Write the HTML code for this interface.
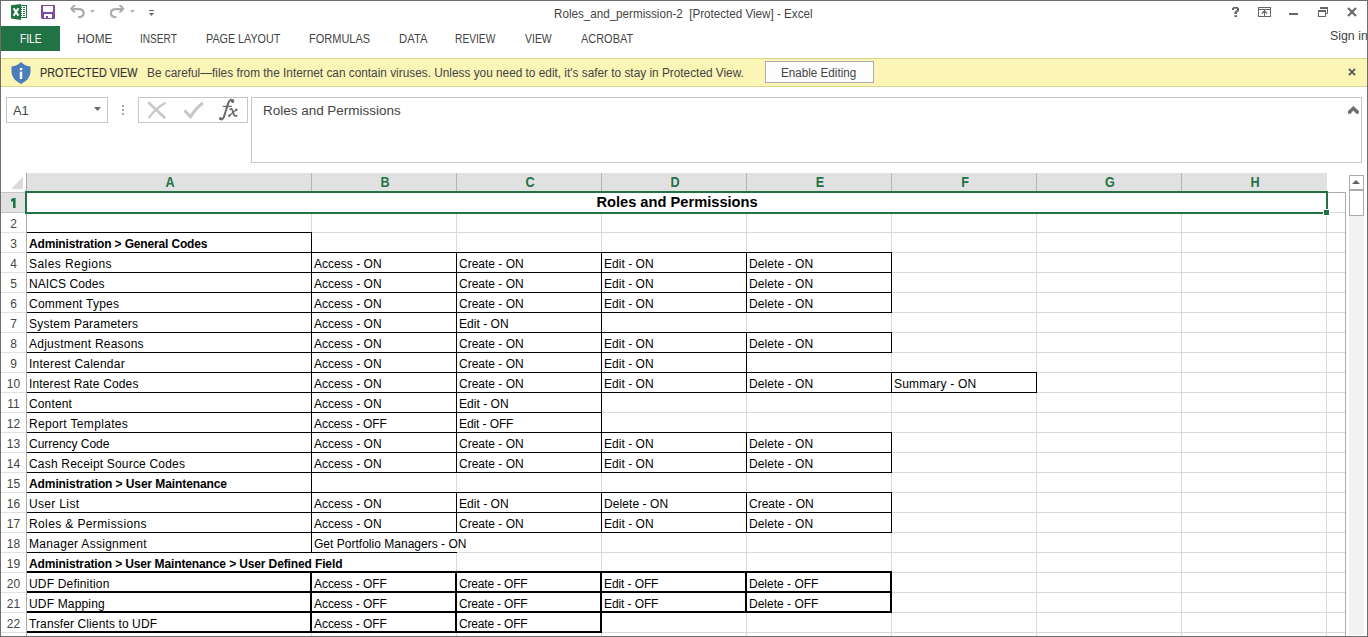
<!DOCTYPE html>
<html><head><meta charset="utf-8"><style>
html,body{margin:0;padding:0;}
body{width:1368px;height:637px;overflow:hidden;position:relative;background:#fff;font-family:'Liberation Sans', sans-serif;}
body div{position:absolute;}
.t{white-space:pre;line-height:0;}
.c{text-align:center;}
svg{position:absolute;}
</style></head><body>
<!-- ribbon / chrome backgrounds -->
<div style="left:1px;top:26px;width:59px;height:25px;background:#217346"></div>
<div style="left:1px;top:58px;width:1366px;height:29px;background:#fbf5b6;border-top:1px solid #dbd68d;border-bottom:1px solid #dbd68d;box-sizing:border-box"></div>
<div style="left:765px;top:61px;width:109px;height:22px;background:#fdfdfd;border:1px solid #ababab;box-sizing:border-box"></div>
<div style="left:6px;top:97px;width:102px;height:26px;border:1px solid #c6c6c6;box-sizing:border-box"></div>
<div style="left:138px;top:97px;width:110px;height:26px;border:1px solid #c6c6c6;box-sizing:border-box"></div>
<div style="left:251px;top:97px;width:1111px;height:66px;border:1px solid #c6c6c6;box-sizing:border-box"></div>
<div class="t" style="left:553.53px;top:14px;font-size:12px;font-weight:400;color:#444;transform:scaleX(0.9698);transform-origin:0 0;">Roles_and_permission-2  [Protected View] - Excel</div>
<div class="t" style="left:19.75px;top:39px;font-size:12px;font-weight:400;color:#fff;transform:scaleX(0.8500);transform-origin:0 0;">FILE</div>
<div class="t" style="left:76.52px;top:39px;font-size:12px;font-weight:400;color:#444;transform:scaleX(0.9800);transform-origin:0 0;">HOME</div>
<div class="t" style="left:140.16px;top:39px;font-size:12px;font-weight:400;color:#444;transform:scaleX(0.8419);transform-origin:0 0;">INSERT</div>
<div class="t" style="left:205.6px;top:39px;font-size:12px;font-weight:400;color:#444;transform:scaleX(0.8963);transform-origin:0 0;">PAGE LAYOUT</div>
<div class="t" style="left:308.58px;top:39px;font-size:12px;font-weight:400;color:#444;transform:scaleX(0.9167);transform-origin:0 0;">FORMULAS</div>
<div class="t" style="left:398.56px;top:39px;font-size:12px;font-weight:400;color:#444;transform:scaleX(0.9448);transform-origin:0 0;">DATA</div>
<div class="t" style="left:455.15px;top:39px;font-size:12px;font-weight:400;color:#444;transform:scaleX(0.8511);transform-origin:0 0;">REVIEW</div>
<div class="t" style="left:525.0px;top:39px;font-size:12px;font-weight:400;color:#444;transform:scaleX(0.8710);transform-origin:0 0;">VIEW</div>
<div class="t" style="left:581.0px;top:39px;font-size:12px;font-weight:400;color:#444;transform:scaleX(0.9123);transform-origin:0 0;">ACROBAT</div>
<div class="t" style="left:1330.47px;top:36px;font-size:12px;font-weight:400;color:#444;transform:scaleX(1.0300);transform-origin:0 0;">Sign in</div>
<div class="t" style="left:40.1px;top:73px;font-size:12px;font-weight:400;color:#333;transform:scaleX(0.9019);transform-origin:0 0;-webkit-text-stroke:0.18px #444;">PROTECTED VIEW</div>
<div class="t" style="left:147.41px;top:73px;font-size:12px;font-weight:400;color:#444;transform:scaleX(0.9854);transform-origin:0 0;">Be careful—files from the Internet can contain viruses. Unless you need to edit, it&#x27;s safer to stay in Protected View.</div>
<div class="t" style="left:780.63px;top:73px;font-size:12px;font-weight:400;color:#444;transform:scaleX(0.9724);transform-origin:0 0;">Enable Editing</div>
<div class="t" style="left:13.0px;top:111px;font-size:12.5px;font-weight:400;color:#444;transform:scaleX(1.0333);transform-origin:0 0;">A1</div>
<div class="t" style="left:262.72px;top:111px;font-size:12.5px;font-weight:400;color:#444;transform:scaleX(1.0772);transform-origin:0 0;">Roles and Permissions</div>
<!-- Excel icon -->
<svg style="left:11px;top:4px" width="17" height="17" viewBox="0 0 17 17">
 <rect x="9.5" y="1.5" width="6" height="12" fill="#fff" stroke="#217346" stroke-width="1"/>
 <polygon points="0,1.2 10,0 10,16 0,14.6" fill="#217346"/>
 <g fill="#217346"><rect x="10" y="3" width="1" height="1"/><rect x="12" y="3" width="2" height="1"/><rect x="10" y="5" width="1" height="1"/><rect x="12" y="5" width="2" height="1"/><rect x="10" y="7" width="1" height="1"/><rect x="12" y="7" width="2" height="1"/><rect x="10" y="9" width="1" height="1"/><rect x="12" y="9" width="2" height="1"/><rect x="10" y="11" width="1" height="1"/><rect x="12" y="11" width="2" height="1"/></g>
 <path d="M2.6 4.3 L7.4 11.8 M7.4 4.3 L2.6 11.8" stroke="#fff" stroke-width="2"/>
</svg>
<!-- Save icon -->
<svg style="left:41px;top:5px" width="14" height="14" viewBox="0 0 14 14">
 <path d="M0 0 H14 V14 H1 L0 13 Z M2 1 V6 Q2 7 3 7 H11 Q12 7 12 6 V1 Z M3 9 V13 H5 V11 H7 V13 H11 V9 Z" fill="#7d48a6" fill-rule="evenodd"/>
</svg>
<!-- undo -->
<svg style="left:69px;top:5px" width="17" height="14" viewBox="0 0 17 14">
 <polygon points="0.9,3.8 4.3,0 7,0 3.6,3.8 7,7.6 4.3,7.6" fill="#ababab"/>
 <path d="M3.5 4.1 H9.5 Q14.6 4.1 14.6 8.2 Q14.6 12.1 9.2 12.1" fill="none" stroke="#ababab" stroke-width="2.2"/>
</svg>
<svg style="left:90px;top:10px" width="5" height="3"><polygon points="0,0 5,0 2.5,3" fill="#b4b4b4"/></svg>
<!-- redo -->
<svg style="left:110px;top:5px" width="17" height="14" viewBox="0 0 17 14">
 <g transform="translate(15.5,0) scale(-1,1)">
 <polygon points="0.9,3.8 4.3,0 7,0 3.6,3.8 7,7.6 4.3,7.6" fill="#ababab"/>
 <path d="M3.5 4.1 H9.5 Q14.6 4.1 14.6 8.2 Q14.6 12.1 9.2 12.1" fill="none" stroke="#ababab" stroke-width="2.2"/>
 </g>
</svg>
<svg style="left:130px;top:10px" width="5" height="3"><polygon points="0,0 5,0 2.5,3" fill="#b4b4b4"/></svg>
<!-- customize QAT -->
<svg style="left:149px;top:10px" width="5" height="6"><rect x="0" y="0" width="5" height="1" fill="#666"/><polygon points="0,3 5,3 2.5,6" fill="#666"/></svg>
<!-- title bar buttons -->
<svg style="left:1232px;top:7px" width="7" height="10" viewBox="0 0 7 10"><g fill="#666">
 <rect x="1" y="0" width="5" height="1.7"/><rect x="0" y="1" width="2" height="2"/><rect x="5" y="1" width="2" height="3.2"/>
 <rect x="3.6" y="3.4" width="2.6" height="1.8"/><rect x="2.4" y="4.6" width="2.6" height="2.4"/><rect x="2.4" y="8.2" width="2.6" height="1.8"/></g></svg>
<svg style="left:1258px;top:7px" width="13" height="10" viewBox="0 0 13 10">
 <rect x="0.5" y="0.5" width="12" height="9" fill="none" stroke="#666" stroke-width="1"/>
 <rect x="0" y="2" width="13" height="1" fill="#666"/>
 <rect x="6" y="2" width="1" height="8" fill="#666"/>
 <path d="M4 6.6 L6.5 4 L9 6.6" fill="none" stroke="#666" stroke-width="1.4"/>
</svg>
<div style="left:1289px;top:13px;width:9px;height:2px;background:#666"></div>
<svg style="left:1318px;top:7px" width="10" height="10" viewBox="0 0 10 10">
 <path d="M2.5 2 V0.5 H9.5 V6.5 H7.5" fill="none" stroke="#666" stroke-width="1"/>
 <rect x="2" y="0" width="8" height="2" fill="#666"/>
 <rect x="0.5" y="3.5" width="7" height="6" fill="none" stroke="#666" stroke-width="1"/>
 <rect x="0" y="3" width="8" height="2" fill="#666"/>
</svg>
<svg style="left:1347px;top:7px" width="10" height="10" viewBox="0 0 10 10">
 <path d="M1 1 L9 9 M9 1 L1 9" stroke="#666" stroke-width="2.1"/>
</svg>
<!-- protected view close -->
<svg style="left:1348px;top:68px" width="8" height="8" viewBox="0 0 8 8">
 <path d="M0.9 0.9 L7.1 7.1 M7.1 0.9 L0.9 7.1" stroke="#585860" stroke-width="1.9"/>
</svg>
<!-- shield -->
<svg style="left:11px;top:62px" width="20" height="23" viewBox="0 0 20 23">
 <path d="M10 0 Q14 4 19.5 4.5 V10 Q19.5 17 10 22 Q0.5 17 0.5 10 V4.5 Q6 4 10 0 Z" fill="#4a7ebb"/>
 <rect x="8.8" y="6" width="2.4" height="2.2" fill="#fff"/>
 <rect x="8.8" y="9.7" width="2.4" height="7.3" fill="#fff"/>
</svg>
<!-- name box dropdown -->
<svg style="left:94px;top:107px" width="8" height="5"><polygon points="0,0 7,0 3.5,4" fill="#6a6a6a"/></svg>
<!-- dots -->
<div style="left:122px;top:105px;width:2px;height:2px;background:#a8a8a8"></div>
<div style="left:122px;top:109px;width:2px;height:2px;background:#a8a8a8"></div>
<div style="left:122px;top:113px;width:2px;height:2px;background:#a8a8a8"></div>
<!-- cancel / enter / fx -->
<svg style="left:147px;top:101px" width="20" height="18" viewBox="0 0 20 18">
 <path d="M2 2 L17.5 16.5" fill="none" stroke="#c6c6c6" stroke-width="2.6" stroke-linecap="round"/>
 <path d="M17.8 2.2 Q9 7 2.2 16.3" fill="none" stroke="#c6c6c6" stroke-width="2.2" stroke-linecap="round"/>
</svg>
<svg style="left:183px;top:101px" width="21" height="18" viewBox="0 0 21 18">
 <path d="M1.5 9.5 L7.5 15.8 Q12 8 19.8 2" fill="none" stroke="#c6c6c6" stroke-width="3" stroke-linejoin="round"/>
</svg>
<svg style="left:214px;top:96px" width="28" height="28" viewBox="0 0 28 28">
 <g fill="none" stroke="#6b6b6b" stroke-linecap="round">
  <path d="M19.2 4.6 Q16.5 2.6 14.6 6.2 L10.2 20 Q8.8 24.6 6.4 22.8" stroke-width="2.1"/>
  <path d="M9.2 10.3 L17.4 10.3" stroke-width="1.3"/>
  <path d="M16.2 13.2 Q17.9 12.3 18.6 14.6 L19.7 18.3 Q20.4 20.6 22.6 19.6" stroke-width="1.8"/>
  <path d="M22.4 13.7 L15.2 19.8" stroke-width="1.2"/>
 </g>
 <g fill="#6b6b6b"><circle cx="18.6" cy="5.4" r="1.5"/><circle cx="6.5" cy="22.4" r="1.5"/><circle cx="22.4" cy="13.7" r="1.2"/><circle cx="15.3" cy="19.8" r="1.2"/></g>
</svg>
<!-- formula bar collapse chevron -->
<svg style="left:1348px;top:106px" width="11" height="8" viewBox="0 0 11 8">
 <polygon points="0,5 5.4,0 10.8,5 10.8,7.8 8.3,7.8 5.4,4.6 2.6,7.8 0,7.8" fill="#6e6e6e"/>
</svg>

<div style="left:27px;top:173px;width:1300px;height:19px;background:#e1e1e1;"></div>
<div style="left:1px;top:193px;width:25px;height:19px;background:#e1e1e1;"></div>
<div style="left:311px;top:173px;width:1px;height:19px;background:#b6b6b6;"></div>
<div style="left:456px;top:173px;width:1px;height:19px;background:#b6b6b6;"></div>
<div style="left:601px;top:173px;width:1px;height:19px;background:#b6b6b6;"></div>
<div style="left:746px;top:173px;width:1px;height:19px;background:#b6b6b6;"></div>
<div style="left:891px;top:173px;width:1px;height:19px;background:#b6b6b6;"></div>
<div style="left:1036px;top:173px;width:1px;height:19px;background:#b6b6b6;"></div>
<div style="left:1181px;top:173px;width:1px;height:19px;background:#b6b6b6;"></div>
<div style="left:26px;top:173px;width:1px;height:464px;background:#ababab;"></div>
<div style="left:1px;top:192px;width:25px;height:1px;background:#c6c6c6;"></div>
<div style="left:1px;top:212px;width:25px;height:1px;background:#c6c6c6;"></div>
<div style="left:1px;top:232px;width:25px;height:1px;background:#e1e1e1;"></div>
<div style="left:1px;top:252px;width:25px;height:1px;background:#e1e1e1;"></div>
<div style="left:1px;top:272px;width:25px;height:1px;background:#e1e1e1;"></div>
<div style="left:1px;top:292px;width:25px;height:1px;background:#e1e1e1;"></div>
<div style="left:1px;top:312px;width:25px;height:1px;background:#e1e1e1;"></div>
<div style="left:1px;top:332px;width:25px;height:1px;background:#e1e1e1;"></div>
<div style="left:1px;top:352px;width:25px;height:1px;background:#e1e1e1;"></div>
<div style="left:1px;top:372px;width:25px;height:1px;background:#e1e1e1;"></div>
<div style="left:1px;top:392px;width:25px;height:1px;background:#e1e1e1;"></div>
<div style="left:1px;top:412px;width:25px;height:1px;background:#e1e1e1;"></div>
<div style="left:1px;top:432px;width:25px;height:1px;background:#e1e1e1;"></div>
<div style="left:1px;top:452px;width:25px;height:1px;background:#e1e1e1;"></div>
<div style="left:1px;top:472px;width:25px;height:1px;background:#e1e1e1;"></div>
<div style="left:1px;top:492px;width:25px;height:1px;background:#e1e1e1;"></div>
<div style="left:1px;top:512px;width:25px;height:1px;background:#e1e1e1;"></div>
<div style="left:1px;top:532px;width:25px;height:1px;background:#e1e1e1;"></div>
<div style="left:1px;top:552px;width:25px;height:1px;background:#e1e1e1;"></div>
<div style="left:1px;top:572px;width:25px;height:1px;background:#e1e1e1;"></div>
<div style="left:1px;top:592px;width:25px;height:1px;background:#e1e1e1;"></div>
<div style="left:1px;top:612px;width:25px;height:1px;background:#e1e1e1;"></div>
<div style="left:1px;top:632px;width:25px;height:1px;background:#e1e1e1;"></div>
<div style="left:27px;top:212px;width:1318px;height:1px;background:#d9d9d9;"></div>
<div style="left:27px;top:232px;width:1318px;height:1px;background:#d9d9d9;"></div>
<div style="left:27px;top:252px;width:1318px;height:1px;background:#d9d9d9;"></div>
<div style="left:27px;top:272px;width:1318px;height:1px;background:#d9d9d9;"></div>
<div style="left:27px;top:292px;width:1318px;height:1px;background:#d9d9d9;"></div>
<div style="left:27px;top:312px;width:1318px;height:1px;background:#d9d9d9;"></div>
<div style="left:27px;top:332px;width:1318px;height:1px;background:#d9d9d9;"></div>
<div style="left:27px;top:352px;width:1318px;height:1px;background:#d9d9d9;"></div>
<div style="left:27px;top:372px;width:1318px;height:1px;background:#d9d9d9;"></div>
<div style="left:27px;top:392px;width:1318px;height:1px;background:#d9d9d9;"></div>
<div style="left:27px;top:412px;width:1318px;height:1px;background:#d9d9d9;"></div>
<div style="left:27px;top:432px;width:1318px;height:1px;background:#d9d9d9;"></div>
<div style="left:27px;top:452px;width:1318px;height:1px;background:#d9d9d9;"></div>
<div style="left:27px;top:472px;width:1318px;height:1px;background:#d9d9d9;"></div>
<div style="left:27px;top:492px;width:1318px;height:1px;background:#d9d9d9;"></div>
<div style="left:27px;top:512px;width:1318px;height:1px;background:#d9d9d9;"></div>
<div style="left:27px;top:532px;width:1318px;height:1px;background:#d9d9d9;"></div>
<div style="left:27px;top:552px;width:1318px;height:1px;background:#d9d9d9;"></div>
<div style="left:27px;top:572px;width:1318px;height:1px;background:#d9d9d9;"></div>
<div style="left:27px;top:592px;width:1318px;height:1px;background:#d9d9d9;"></div>
<div style="left:27px;top:612px;width:1318px;height:1px;background:#d9d9d9;"></div>
<div style="left:27px;top:632px;width:1318px;height:1px;background:#d9d9d9;"></div>
<div style="left:311px;top:213px;width:1px;height:424px;background:#d9d9d9;"></div>
<div style="left:456px;top:213px;width:1px;height:424px;background:#d9d9d9;"></div>
<div style="left:601px;top:213px;width:1px;height:424px;background:#d9d9d9;"></div>
<div style="left:746px;top:213px;width:1px;height:424px;background:#d9d9d9;"></div>
<div style="left:891px;top:213px;width:1px;height:424px;background:#d9d9d9;"></div>
<div style="left:1036px;top:213px;width:1px;height:424px;background:#d9d9d9;"></div>
<div style="left:1181px;top:213px;width:1px;height:424px;background:#d9d9d9;"></div>
<div style="left:1326px;top:193px;width:1px;height:444px;background:#d9d9d9;"></div>
<div style="left:1345px;top:192px;width:1px;height:445px;background:#ababab;"></div>
<div style="left:1327px;top:192px;width:18px;height:1px;background:#ababab;"></div>
<svg style="position:absolute;left:11px;top:177px" width="13" height="13"><polygon points="12,0 12,12 0,12" fill="#dadada"/></svg>
<div style="left:456px;top:533px;width:1px;height:19px;background:#fff;"></div>
<div style="left:311px;top:553px;width:1px;height:19px;background:#fff;"></div>
<div style="left:27px;top:232px;width:285px;height:1px;background:#000"></div>
<div style="left:27px;top:252px;width:285px;height:1px;background:#000"></div>
<div style="left:311px;top:232px;width:1px;height:21px;background:#000"></div>
<div style="left:27px;top:252px;width:285px;height:1px;background:#000"></div>
<div style="left:27px;top:272px;width:285px;height:1px;background:#000"></div>
<div style="left:311px;top:252px;width:1px;height:21px;background:#000"></div>
<div style="left:311px;top:252px;width:146px;height:1px;background:#000"></div>
<div style="left:311px;top:272px;width:146px;height:1px;background:#000"></div>
<div style="left:311px;top:252px;width:1px;height:21px;background:#000"></div>
<div style="left:456px;top:252px;width:1px;height:21px;background:#000"></div>
<div style="left:456px;top:252px;width:146px;height:1px;background:#000"></div>
<div style="left:456px;top:272px;width:146px;height:1px;background:#000"></div>
<div style="left:456px;top:252px;width:1px;height:21px;background:#000"></div>
<div style="left:601px;top:252px;width:1px;height:21px;background:#000"></div>
<div style="left:601px;top:252px;width:146px;height:1px;background:#000"></div>
<div style="left:601px;top:272px;width:146px;height:1px;background:#000"></div>
<div style="left:601px;top:252px;width:1px;height:21px;background:#000"></div>
<div style="left:746px;top:252px;width:1px;height:21px;background:#000"></div>
<div style="left:746px;top:252px;width:146px;height:1px;background:#000"></div>
<div style="left:746px;top:272px;width:146px;height:1px;background:#000"></div>
<div style="left:746px;top:252px;width:1px;height:21px;background:#000"></div>
<div style="left:891px;top:252px;width:1px;height:21px;background:#000"></div>
<div style="left:27px;top:272px;width:285px;height:1px;background:#000"></div>
<div style="left:27px;top:292px;width:285px;height:1px;background:#000"></div>
<div style="left:311px;top:272px;width:1px;height:21px;background:#000"></div>
<div style="left:311px;top:272px;width:146px;height:1px;background:#000"></div>
<div style="left:311px;top:292px;width:146px;height:1px;background:#000"></div>
<div style="left:311px;top:272px;width:1px;height:21px;background:#000"></div>
<div style="left:456px;top:272px;width:1px;height:21px;background:#000"></div>
<div style="left:456px;top:272px;width:146px;height:1px;background:#000"></div>
<div style="left:456px;top:292px;width:146px;height:1px;background:#000"></div>
<div style="left:456px;top:272px;width:1px;height:21px;background:#000"></div>
<div style="left:601px;top:272px;width:1px;height:21px;background:#000"></div>
<div style="left:601px;top:272px;width:146px;height:1px;background:#000"></div>
<div style="left:601px;top:292px;width:146px;height:1px;background:#000"></div>
<div style="left:601px;top:272px;width:1px;height:21px;background:#000"></div>
<div style="left:746px;top:272px;width:1px;height:21px;background:#000"></div>
<div style="left:746px;top:272px;width:146px;height:1px;background:#000"></div>
<div style="left:746px;top:292px;width:146px;height:1px;background:#000"></div>
<div style="left:746px;top:272px;width:1px;height:21px;background:#000"></div>
<div style="left:891px;top:272px;width:1px;height:21px;background:#000"></div>
<div style="left:27px;top:292px;width:285px;height:1px;background:#000"></div>
<div style="left:27px;top:312px;width:285px;height:1px;background:#000"></div>
<div style="left:311px;top:292px;width:1px;height:21px;background:#000"></div>
<div style="left:311px;top:292px;width:146px;height:1px;background:#000"></div>
<div style="left:311px;top:312px;width:146px;height:1px;background:#000"></div>
<div style="left:311px;top:292px;width:1px;height:21px;background:#000"></div>
<div style="left:456px;top:292px;width:1px;height:21px;background:#000"></div>
<div style="left:456px;top:292px;width:146px;height:1px;background:#000"></div>
<div style="left:456px;top:312px;width:146px;height:1px;background:#000"></div>
<div style="left:456px;top:292px;width:1px;height:21px;background:#000"></div>
<div style="left:601px;top:292px;width:1px;height:21px;background:#000"></div>
<div style="left:601px;top:292px;width:146px;height:1px;background:#000"></div>
<div style="left:601px;top:312px;width:146px;height:1px;background:#000"></div>
<div style="left:601px;top:292px;width:1px;height:21px;background:#000"></div>
<div style="left:746px;top:292px;width:1px;height:21px;background:#000"></div>
<div style="left:746px;top:292px;width:146px;height:1px;background:#000"></div>
<div style="left:746px;top:312px;width:146px;height:1px;background:#000"></div>
<div style="left:746px;top:292px;width:1px;height:21px;background:#000"></div>
<div style="left:891px;top:292px;width:1px;height:21px;background:#000"></div>
<div style="left:27px;top:312px;width:285px;height:1px;background:#000"></div>
<div style="left:27px;top:332px;width:285px;height:1px;background:#000"></div>
<div style="left:311px;top:312px;width:1px;height:21px;background:#000"></div>
<div style="left:311px;top:312px;width:146px;height:1px;background:#000"></div>
<div style="left:311px;top:332px;width:146px;height:1px;background:#000"></div>
<div style="left:311px;top:312px;width:1px;height:21px;background:#000"></div>
<div style="left:456px;top:312px;width:1px;height:21px;background:#000"></div>
<div style="left:456px;top:312px;width:146px;height:1px;background:#000"></div>
<div style="left:456px;top:332px;width:146px;height:1px;background:#000"></div>
<div style="left:456px;top:312px;width:1px;height:21px;background:#000"></div>
<div style="left:601px;top:312px;width:1px;height:21px;background:#000"></div>
<div style="left:27px;top:332px;width:285px;height:1px;background:#000"></div>
<div style="left:27px;top:352px;width:285px;height:1px;background:#000"></div>
<div style="left:311px;top:332px;width:1px;height:21px;background:#000"></div>
<div style="left:311px;top:332px;width:146px;height:1px;background:#000"></div>
<div style="left:311px;top:352px;width:146px;height:1px;background:#000"></div>
<div style="left:311px;top:332px;width:1px;height:21px;background:#000"></div>
<div style="left:456px;top:332px;width:1px;height:21px;background:#000"></div>
<div style="left:456px;top:332px;width:146px;height:1px;background:#000"></div>
<div style="left:456px;top:352px;width:146px;height:1px;background:#000"></div>
<div style="left:456px;top:332px;width:1px;height:21px;background:#000"></div>
<div style="left:601px;top:332px;width:1px;height:21px;background:#000"></div>
<div style="left:601px;top:332px;width:146px;height:1px;background:#000"></div>
<div style="left:601px;top:352px;width:146px;height:1px;background:#000"></div>
<div style="left:601px;top:332px;width:1px;height:21px;background:#000"></div>
<div style="left:746px;top:332px;width:1px;height:21px;background:#000"></div>
<div style="left:746px;top:332px;width:146px;height:1px;background:#000"></div>
<div style="left:746px;top:352px;width:146px;height:1px;background:#000"></div>
<div style="left:746px;top:332px;width:1px;height:21px;background:#000"></div>
<div style="left:891px;top:332px;width:1px;height:21px;background:#000"></div>
<div style="left:27px;top:352px;width:285px;height:1px;background:#000"></div>
<div style="left:27px;top:372px;width:285px;height:1px;background:#000"></div>
<div style="left:311px;top:352px;width:1px;height:21px;background:#000"></div>
<div style="left:311px;top:352px;width:146px;height:1px;background:#000"></div>
<div style="left:311px;top:372px;width:146px;height:1px;background:#000"></div>
<div style="left:311px;top:352px;width:1px;height:21px;background:#000"></div>
<div style="left:456px;top:352px;width:1px;height:21px;background:#000"></div>
<div style="left:456px;top:352px;width:146px;height:1px;background:#000"></div>
<div style="left:456px;top:372px;width:146px;height:1px;background:#000"></div>
<div style="left:456px;top:352px;width:1px;height:21px;background:#000"></div>
<div style="left:601px;top:352px;width:1px;height:21px;background:#000"></div>
<div style="left:601px;top:352px;width:146px;height:1px;background:#000"></div>
<div style="left:601px;top:372px;width:146px;height:1px;background:#000"></div>
<div style="left:601px;top:352px;width:1px;height:21px;background:#000"></div>
<div style="left:746px;top:352px;width:1px;height:21px;background:#000"></div>
<div style="left:27px;top:372px;width:285px;height:1px;background:#000"></div>
<div style="left:27px;top:392px;width:285px;height:1px;background:#000"></div>
<div style="left:311px;top:372px;width:1px;height:21px;background:#000"></div>
<div style="left:311px;top:372px;width:146px;height:1px;background:#000"></div>
<div style="left:311px;top:392px;width:146px;height:1px;background:#000"></div>
<div style="left:311px;top:372px;width:1px;height:21px;background:#000"></div>
<div style="left:456px;top:372px;width:1px;height:21px;background:#000"></div>
<div style="left:456px;top:372px;width:146px;height:1px;background:#000"></div>
<div style="left:456px;top:392px;width:146px;height:1px;background:#000"></div>
<div style="left:456px;top:372px;width:1px;height:21px;background:#000"></div>
<div style="left:601px;top:372px;width:1px;height:21px;background:#000"></div>
<div style="left:601px;top:372px;width:146px;height:1px;background:#000"></div>
<div style="left:601px;top:392px;width:146px;height:1px;background:#000"></div>
<div style="left:601px;top:372px;width:1px;height:21px;background:#000"></div>
<div style="left:746px;top:372px;width:1px;height:21px;background:#000"></div>
<div style="left:746px;top:372px;width:146px;height:1px;background:#000"></div>
<div style="left:746px;top:392px;width:146px;height:1px;background:#000"></div>
<div style="left:746px;top:372px;width:1px;height:21px;background:#000"></div>
<div style="left:891px;top:372px;width:1px;height:21px;background:#000"></div>
<div style="left:891px;top:372px;width:146px;height:1px;background:#000"></div>
<div style="left:891px;top:392px;width:146px;height:1px;background:#000"></div>
<div style="left:891px;top:372px;width:1px;height:21px;background:#000"></div>
<div style="left:1036px;top:372px;width:1px;height:21px;background:#000"></div>
<div style="left:27px;top:392px;width:285px;height:1px;background:#000"></div>
<div style="left:27px;top:412px;width:285px;height:1px;background:#000"></div>
<div style="left:311px;top:392px;width:1px;height:21px;background:#000"></div>
<div style="left:311px;top:392px;width:146px;height:1px;background:#000"></div>
<div style="left:311px;top:412px;width:146px;height:1px;background:#000"></div>
<div style="left:311px;top:392px;width:1px;height:21px;background:#000"></div>
<div style="left:456px;top:392px;width:1px;height:21px;background:#000"></div>
<div style="left:456px;top:392px;width:146px;height:1px;background:#000"></div>
<div style="left:456px;top:412px;width:146px;height:1px;background:#000"></div>
<div style="left:456px;top:392px;width:1px;height:21px;background:#000"></div>
<div style="left:601px;top:392px;width:1px;height:21px;background:#000"></div>
<div style="left:27px;top:412px;width:285px;height:1px;background:#000"></div>
<div style="left:27px;top:432px;width:285px;height:1px;background:#000"></div>
<div style="left:311px;top:412px;width:1px;height:21px;background:#000"></div>
<div style="left:311px;top:412px;width:146px;height:1px;background:#000"></div>
<div style="left:311px;top:432px;width:146px;height:1px;background:#000"></div>
<div style="left:311px;top:412px;width:1px;height:21px;background:#000"></div>
<div style="left:456px;top:412px;width:1px;height:21px;background:#000"></div>
<div style="left:456px;top:412px;width:146px;height:1px;background:#000"></div>
<div style="left:456px;top:432px;width:146px;height:1px;background:#000"></div>
<div style="left:456px;top:412px;width:1px;height:21px;background:#000"></div>
<div style="left:601px;top:412px;width:1px;height:21px;background:#000"></div>
<div style="left:27px;top:432px;width:285px;height:1px;background:#000"></div>
<div style="left:27px;top:452px;width:285px;height:1px;background:#000"></div>
<div style="left:311px;top:432px;width:1px;height:21px;background:#000"></div>
<div style="left:311px;top:432px;width:146px;height:1px;background:#000"></div>
<div style="left:311px;top:452px;width:146px;height:1px;background:#000"></div>
<div style="left:311px;top:432px;width:1px;height:21px;background:#000"></div>
<div style="left:456px;top:432px;width:1px;height:21px;background:#000"></div>
<div style="left:456px;top:432px;width:146px;height:1px;background:#000"></div>
<div style="left:456px;top:452px;width:146px;height:1px;background:#000"></div>
<div style="left:456px;top:432px;width:1px;height:21px;background:#000"></div>
<div style="left:601px;top:432px;width:1px;height:21px;background:#000"></div>
<div style="left:601px;top:432px;width:146px;height:1px;background:#000"></div>
<div style="left:601px;top:452px;width:146px;height:1px;background:#000"></div>
<div style="left:601px;top:432px;width:1px;height:21px;background:#000"></div>
<div style="left:746px;top:432px;width:1px;height:21px;background:#000"></div>
<div style="left:746px;top:432px;width:146px;height:1px;background:#000"></div>
<div style="left:746px;top:452px;width:146px;height:1px;background:#000"></div>
<div style="left:746px;top:432px;width:1px;height:21px;background:#000"></div>
<div style="left:891px;top:432px;width:1px;height:21px;background:#000"></div>
<div style="left:27px;top:452px;width:285px;height:1px;background:#000"></div>
<div style="left:27px;top:472px;width:285px;height:1px;background:#000"></div>
<div style="left:311px;top:452px;width:1px;height:21px;background:#000"></div>
<div style="left:311px;top:452px;width:146px;height:1px;background:#000"></div>
<div style="left:311px;top:472px;width:146px;height:1px;background:#000"></div>
<div style="left:311px;top:452px;width:1px;height:21px;background:#000"></div>
<div style="left:456px;top:452px;width:1px;height:21px;background:#000"></div>
<div style="left:456px;top:452px;width:146px;height:1px;background:#000"></div>
<div style="left:456px;top:472px;width:146px;height:1px;background:#000"></div>
<div style="left:456px;top:452px;width:1px;height:21px;background:#000"></div>
<div style="left:601px;top:452px;width:1px;height:21px;background:#000"></div>
<div style="left:601px;top:452px;width:146px;height:1px;background:#000"></div>
<div style="left:601px;top:472px;width:146px;height:1px;background:#000"></div>
<div style="left:601px;top:452px;width:1px;height:21px;background:#000"></div>
<div style="left:746px;top:452px;width:1px;height:21px;background:#000"></div>
<div style="left:746px;top:452px;width:146px;height:1px;background:#000"></div>
<div style="left:746px;top:472px;width:146px;height:1px;background:#000"></div>
<div style="left:746px;top:452px;width:1px;height:21px;background:#000"></div>
<div style="left:891px;top:452px;width:1px;height:21px;background:#000"></div>
<div style="left:27px;top:472px;width:285px;height:1px;background:#000"></div>
<div style="left:27px;top:492px;width:285px;height:1px;background:#000"></div>
<div style="left:311px;top:472px;width:1px;height:21px;background:#000"></div>
<div style="left:27px;top:492px;width:285px;height:1px;background:#000"></div>
<div style="left:27px;top:512px;width:285px;height:1px;background:#000"></div>
<div style="left:311px;top:492px;width:1px;height:21px;background:#000"></div>
<div style="left:311px;top:492px;width:146px;height:1px;background:#000"></div>
<div style="left:311px;top:512px;width:146px;height:1px;background:#000"></div>
<div style="left:311px;top:492px;width:1px;height:21px;background:#000"></div>
<div style="left:456px;top:492px;width:1px;height:21px;background:#000"></div>
<div style="left:456px;top:492px;width:146px;height:1px;background:#000"></div>
<div style="left:456px;top:512px;width:146px;height:1px;background:#000"></div>
<div style="left:456px;top:492px;width:1px;height:21px;background:#000"></div>
<div style="left:601px;top:492px;width:1px;height:21px;background:#000"></div>
<div style="left:601px;top:492px;width:146px;height:1px;background:#000"></div>
<div style="left:601px;top:512px;width:146px;height:1px;background:#000"></div>
<div style="left:601px;top:492px;width:1px;height:21px;background:#000"></div>
<div style="left:746px;top:492px;width:1px;height:21px;background:#000"></div>
<div style="left:746px;top:492px;width:146px;height:1px;background:#000"></div>
<div style="left:746px;top:512px;width:146px;height:1px;background:#000"></div>
<div style="left:746px;top:492px;width:1px;height:21px;background:#000"></div>
<div style="left:891px;top:492px;width:1px;height:21px;background:#000"></div>
<div style="left:27px;top:512px;width:285px;height:1px;background:#000"></div>
<div style="left:27px;top:532px;width:285px;height:1px;background:#000"></div>
<div style="left:311px;top:512px;width:1px;height:21px;background:#000"></div>
<div style="left:311px;top:512px;width:146px;height:1px;background:#000"></div>
<div style="left:311px;top:532px;width:146px;height:1px;background:#000"></div>
<div style="left:311px;top:512px;width:1px;height:21px;background:#000"></div>
<div style="left:456px;top:512px;width:1px;height:21px;background:#000"></div>
<div style="left:456px;top:512px;width:146px;height:1px;background:#000"></div>
<div style="left:456px;top:532px;width:146px;height:1px;background:#000"></div>
<div style="left:456px;top:512px;width:1px;height:21px;background:#000"></div>
<div style="left:601px;top:512px;width:1px;height:21px;background:#000"></div>
<div style="left:601px;top:512px;width:146px;height:1px;background:#000"></div>
<div style="left:601px;top:532px;width:146px;height:1px;background:#000"></div>
<div style="left:601px;top:512px;width:1px;height:21px;background:#000"></div>
<div style="left:746px;top:512px;width:1px;height:21px;background:#000"></div>
<div style="left:746px;top:512px;width:146px;height:1px;background:#000"></div>
<div style="left:746px;top:532px;width:146px;height:1px;background:#000"></div>
<div style="left:746px;top:512px;width:1px;height:21px;background:#000"></div>
<div style="left:891px;top:512px;width:1px;height:21px;background:#000"></div>
<div style="left:27px;top:532px;width:285px;height:1px;background:#000"></div>
<div style="left:27px;top:552px;width:285px;height:1px;background:#000"></div>
<div style="left:311px;top:532px;width:1px;height:21px;background:#000"></div>
<div style="left:311px;top:552px;width:146px;height:1px;background:#000"></div>
<div style="left:311px;top:532px;width:146px;height:1px;background:#000"></div>
<div style="left:27px;top:572px;width:285px;height:1px;background:#000"></div>
<div style="left:27px;top:571px;width:285px;height:2px;background:#000"></div>
<div style="left:27px;top:591px;width:285px;height:2px;background:#000"></div>
<div style="left:310px;top:572px;width:2px;height:21px;background:#000"></div>
<div style="left:310px;top:571px;width:147px;height:2px;background:#000"></div>
<div style="left:310px;top:591px;width:147px;height:2px;background:#000"></div>
<div style="left:310px;top:572px;width:2px;height:21px;background:#000"></div>
<div style="left:455px;top:572px;width:2px;height:21px;background:#000"></div>
<div style="left:455px;top:571px;width:147px;height:2px;background:#000"></div>
<div style="left:455px;top:591px;width:147px;height:2px;background:#000"></div>
<div style="left:455px;top:572px;width:2px;height:21px;background:#000"></div>
<div style="left:600px;top:572px;width:2px;height:21px;background:#000"></div>
<div style="left:600px;top:571px;width:147px;height:2px;background:#000"></div>
<div style="left:600px;top:591px;width:147px;height:2px;background:#000"></div>
<div style="left:600px;top:572px;width:2px;height:21px;background:#000"></div>
<div style="left:745px;top:572px;width:2px;height:21px;background:#000"></div>
<div style="left:745px;top:571px;width:147px;height:2px;background:#000"></div>
<div style="left:745px;top:591px;width:147px;height:2px;background:#000"></div>
<div style="left:745px;top:572px;width:2px;height:21px;background:#000"></div>
<div style="left:890px;top:572px;width:2px;height:21px;background:#000"></div>
<div style="left:27px;top:591px;width:285px;height:2px;background:#000"></div>
<div style="left:27px;top:611px;width:285px;height:2px;background:#000"></div>
<div style="left:310px;top:592px;width:2px;height:21px;background:#000"></div>
<div style="left:310px;top:591px;width:147px;height:2px;background:#000"></div>
<div style="left:310px;top:611px;width:147px;height:2px;background:#000"></div>
<div style="left:310px;top:592px;width:2px;height:21px;background:#000"></div>
<div style="left:455px;top:592px;width:2px;height:21px;background:#000"></div>
<div style="left:455px;top:591px;width:147px;height:2px;background:#000"></div>
<div style="left:455px;top:611px;width:147px;height:2px;background:#000"></div>
<div style="left:455px;top:592px;width:2px;height:21px;background:#000"></div>
<div style="left:600px;top:592px;width:2px;height:21px;background:#000"></div>
<div style="left:600px;top:591px;width:147px;height:2px;background:#000"></div>
<div style="left:600px;top:611px;width:147px;height:2px;background:#000"></div>
<div style="left:600px;top:592px;width:2px;height:21px;background:#000"></div>
<div style="left:745px;top:592px;width:2px;height:21px;background:#000"></div>
<div style="left:745px;top:591px;width:147px;height:2px;background:#000"></div>
<div style="left:745px;top:611px;width:147px;height:2px;background:#000"></div>
<div style="left:745px;top:592px;width:2px;height:21px;background:#000"></div>
<div style="left:890px;top:592px;width:2px;height:21px;background:#000"></div>
<div style="left:27px;top:611px;width:285px;height:2px;background:#000"></div>
<div style="left:27px;top:631px;width:285px;height:2px;background:#000"></div>
<div style="left:310px;top:612px;width:2px;height:21px;background:#000"></div>
<div style="left:310px;top:611px;width:147px;height:2px;background:#000"></div>
<div style="left:310px;top:631px;width:147px;height:2px;background:#000"></div>
<div style="left:310px;top:612px;width:2px;height:21px;background:#000"></div>
<div style="left:455px;top:612px;width:2px;height:21px;background:#000"></div>
<div style="left:455px;top:611px;width:147px;height:2px;background:#000"></div>
<div style="left:455px;top:631px;width:147px;height:2px;background:#000"></div>
<div style="left:455px;top:612px;width:2px;height:21px;background:#000"></div>
<div style="left:600px;top:612px;width:2px;height:21px;background:#000"></div>
<div class="t" style="left:29px;top:244px;font-size:12px;font-weight:700;color:#000;letter-spacing:-0.159px;">Administration &gt; General Codes</div>
<div class="t" style="left:29px;top:264px;font-size:12px;font-weight:400;color:#000;letter-spacing:0.433px;">Sales Regions</div>
<div class="t" style="left:314px;top:264px;font-size:12px;font-weight:400;color:#000;letter-spacing:0.020px;">Access - ON</div>
<div class="t" style="left:459px;top:264px;font-size:12px;font-weight:400;color:#000;letter-spacing:0.000px;">Create - ON</div>
<div class="t" style="left:604px;top:264px;font-size:12px;font-weight:400;color:#000;letter-spacing:0.025px;">Edit - ON</div>
<div class="t" style="left:749px;top:264px;font-size:12px;font-weight:400;color:#000;letter-spacing:0.080px;">Delete - ON</div>
<div class="t" style="left:29px;top:284px;font-size:12px;font-weight:400;color:#000;letter-spacing:0.090px;">NAICS Codes</div>
<div class="t" style="left:314px;top:284px;font-size:12px;font-weight:400;color:#000;letter-spacing:0.020px;">Access - ON</div>
<div class="t" style="left:459px;top:284px;font-size:12px;font-weight:400;color:#000;letter-spacing:0.000px;">Create - ON</div>
<div class="t" style="left:604px;top:284px;font-size:12px;font-weight:400;color:#000;letter-spacing:0.025px;">Edit - ON</div>
<div class="t" style="left:749px;top:284px;font-size:12px;font-weight:400;color:#000;letter-spacing:0.080px;">Delete - ON</div>
<div class="t" style="left:29px;top:304px;font-size:12px;font-weight:400;color:#000;letter-spacing:0.233px;">Comment Types</div>
<div class="t" style="left:314px;top:304px;font-size:12px;font-weight:400;color:#000;letter-spacing:0.020px;">Access - ON</div>
<div class="t" style="left:459px;top:304px;font-size:12px;font-weight:400;color:#000;letter-spacing:0.000px;">Create - ON</div>
<div class="t" style="left:604px;top:304px;font-size:12px;font-weight:400;color:#000;letter-spacing:0.025px;">Edit - ON</div>
<div class="t" style="left:749px;top:304px;font-size:12px;font-weight:400;color:#000;letter-spacing:0.080px;">Delete - ON</div>
<div class="t" style="left:29px;top:324px;font-size:12px;font-weight:400;color:#000;letter-spacing:0.231px;">System Parameters</div>
<div class="t" style="left:314px;top:324px;font-size:12px;font-weight:400;color:#000;letter-spacing:0.020px;">Access - ON</div>
<div class="t" style="left:459px;top:324px;font-size:12px;font-weight:400;color:#000;letter-spacing:0.025px;">Edit - ON</div>
<div class="t" style="left:29px;top:344px;font-size:12px;font-weight:400;color:#000;letter-spacing:0.229px;">Adjustment Reasons</div>
<div class="t" style="left:314px;top:344px;font-size:12px;font-weight:400;color:#000;letter-spacing:0.020px;">Access - ON</div>
<div class="t" style="left:459px;top:344px;font-size:12px;font-weight:400;color:#000;letter-spacing:0.000px;">Create - ON</div>
<div class="t" style="left:604px;top:344px;font-size:12px;font-weight:400;color:#000;letter-spacing:0.025px;">Edit - ON</div>
<div class="t" style="left:749px;top:344px;font-size:12px;font-weight:400;color:#000;letter-spacing:0.080px;">Delete - ON</div>
<div class="t" style="left:29px;top:364px;font-size:12px;font-weight:400;color:#000;letter-spacing:0.225px;">Interest Calendar</div>
<div class="t" style="left:314px;top:364px;font-size:12px;font-weight:400;color:#000;letter-spacing:0.020px;">Access - ON</div>
<div class="t" style="left:459px;top:364px;font-size:12px;font-weight:400;color:#000;letter-spacing:0.000px;">Create - ON</div>
<div class="t" style="left:604px;top:364px;font-size:12px;font-weight:400;color:#000;letter-spacing:0.025px;">Edit - ON</div>
<div class="t" style="left:29px;top:384px;font-size:12px;font-weight:400;color:#000;letter-spacing:0.150px;">Interest Rate Codes</div>
<div class="t" style="left:314px;top:384px;font-size:12px;font-weight:400;color:#000;letter-spacing:0.020px;">Access - ON</div>
<div class="t" style="left:459px;top:384px;font-size:12px;font-weight:400;color:#000;letter-spacing:0.000px;">Create - ON</div>
<div class="t" style="left:604px;top:384px;font-size:12px;font-weight:400;color:#000;letter-spacing:0.025px;">Edit - ON</div>
<div class="t" style="left:749px;top:384px;font-size:12px;font-weight:400;color:#000;letter-spacing:0.080px;">Delete - ON</div>
<div class="t" style="left:894px;top:384px;font-size:12px;font-weight:400;color:#000;letter-spacing:0.200px;">Summary - ON</div>
<div class="t" style="left:29px;top:404px;font-size:12px;font-weight:400;color:#000;letter-spacing:0.133px;">Content</div>
<div class="t" style="left:314px;top:404px;font-size:12px;font-weight:400;color:#000;letter-spacing:0.020px;">Access - ON</div>
<div class="t" style="left:459px;top:404px;font-size:12px;font-weight:400;color:#000;letter-spacing:0.025px;">Edit - ON</div>
<div class="t" style="left:29px;top:424px;font-size:12px;font-weight:400;color:#000;letter-spacing:0.333px;">Report Templates</div>
<div class="t" style="left:314px;top:424px;font-size:12px;font-weight:400;color:#000;letter-spacing:-0.045px;">Access - OFF</div>
<div class="t" style="left:459px;top:424px;font-size:12px;font-weight:400;color:#000;letter-spacing:-0.100px;">Edit - OFF</div>
<div class="t" style="left:29px;top:444px;font-size:12px;font-weight:400;color:#000;letter-spacing:-0.025px;">Currency Code</div>
<div class="t" style="left:314px;top:444px;font-size:12px;font-weight:400;color:#000;letter-spacing:0.020px;">Access - ON</div>
<div class="t" style="left:459px;top:444px;font-size:12px;font-weight:400;color:#000;letter-spacing:0.000px;">Create - ON</div>
<div class="t" style="left:604px;top:444px;font-size:12px;font-weight:400;color:#000;letter-spacing:0.025px;">Edit - ON</div>
<div class="t" style="left:749px;top:444px;font-size:12px;font-weight:400;color:#000;letter-spacing:0.080px;">Delete - ON</div>
<div class="t" style="left:29px;top:464px;font-size:12px;font-weight:400;color:#000;letter-spacing:0.188px;">Cash Receipt Source Codes</div>
<div class="t" style="left:314px;top:464px;font-size:12px;font-weight:400;color:#000;letter-spacing:0.020px;">Access - ON</div>
<div class="t" style="left:459px;top:464px;font-size:12px;font-weight:400;color:#000;letter-spacing:0.000px;">Create - ON</div>
<div class="t" style="left:604px;top:464px;font-size:12px;font-weight:400;color:#000;letter-spacing:0.025px;">Edit - ON</div>
<div class="t" style="left:749px;top:464px;font-size:12px;font-weight:400;color:#000;letter-spacing:0.080px;">Delete - ON</div>
<div class="t" style="left:29px;top:484px;font-size:12px;font-weight:700;color:#000;letter-spacing:-0.094px;">Administration &gt; User Maintenance</div>
<div class="t" style="left:29px;top:504px;font-size:12px;font-weight:400;color:#000;letter-spacing:0.338px;">User List</div>
<div class="t" style="left:314px;top:504px;font-size:12px;font-weight:400;color:#000;letter-spacing:0.020px;">Access - ON</div>
<div class="t" style="left:459px;top:504px;font-size:12px;font-weight:400;color:#000;letter-spacing:0.025px;">Edit - ON</div>
<div class="t" style="left:604px;top:504px;font-size:12px;font-weight:400;color:#000;letter-spacing:0.080px;">Delete - ON</div>
<div class="t" style="left:749px;top:504px;font-size:12px;font-weight:400;color:#000;letter-spacing:0.000px;">Create - ON</div>
<div class="t" style="left:29px;top:524px;font-size:12px;font-weight:400;color:#000;letter-spacing:0.383px;">Roles &amp; Permissions</div>
<div class="t" style="left:314px;top:524px;font-size:12px;font-weight:400;color:#000;letter-spacing:0.020px;">Access - ON</div>
<div class="t" style="left:459px;top:524px;font-size:12px;font-weight:400;color:#000;letter-spacing:0.000px;">Create - ON</div>
<div class="t" style="left:604px;top:524px;font-size:12px;font-weight:400;color:#000;letter-spacing:0.025px;">Edit - ON</div>
<div class="t" style="left:749px;top:524px;font-size:12px;font-weight:400;color:#000;letter-spacing:0.080px;">Delete - ON</div>
<div class="t" style="left:29px;top:544px;font-size:12px;font-weight:400;color:#000;letter-spacing:0.288px;">Manager Assignment</div>
<div class="t" style="left:314px;top:544px;font-size:12px;font-weight:400;color:#000;letter-spacing:0.015px;">Get Portfolio Managers - ON</div>
<div class="t" style="left:29px;top:564px;font-size:12px;font-weight:700;color:#000;letter-spacing:-0.125px;">Administration &gt; User Maintenance &gt; User Defined Field</div>
<div class="t" style="left:29px;top:584px;font-size:12px;font-weight:400;color:#000;letter-spacing:0.177px;">UDF Definition</div>
<div class="t" style="left:314px;top:584px;font-size:12px;font-weight:400;color:#000;letter-spacing:-0.045px;">Access - OFF</div>
<div class="t" style="left:459px;top:584px;font-size:12px;font-weight:400;color:#000;letter-spacing:-0.182px;">Create - OFF</div>
<div class="t" style="left:604px;top:584px;font-size:12px;font-weight:400;color:#000;letter-spacing:-0.100px;">Edit - OFF</div>
<div class="t" style="left:749px;top:584px;font-size:12px;font-weight:400;color:#000;letter-spacing:0.009px;">Delete - OFF</div>
<div class="t" style="left:29px;top:604px;font-size:12px;font-weight:400;color:#000;letter-spacing:0.170px;">UDF Mapping</div>
<div class="t" style="left:314px;top:604px;font-size:12px;font-weight:400;color:#000;letter-spacing:-0.045px;">Access - OFF</div>
<div class="t" style="left:459px;top:604px;font-size:12px;font-weight:400;color:#000;letter-spacing:-0.182px;">Create - OFF</div>
<div class="t" style="left:604px;top:604px;font-size:12px;font-weight:400;color:#000;letter-spacing:-0.100px;">Edit - OFF</div>
<div class="t" style="left:749px;top:604px;font-size:12px;font-weight:400;color:#000;letter-spacing:0.009px;">Delete - OFF</div>
<div class="t" style="left:29px;top:624px;font-size:12px;font-weight:400;color:#000;letter-spacing:0.109px;">Transfer Clients to UDF</div>
<div class="t" style="left:314px;top:624px;font-size:12px;font-weight:400;color:#000;letter-spacing:-0.045px;">Access - OFF</div>
<div class="t" style="left:459px;top:624px;font-size:12px;font-weight:400;color:#000;letter-spacing:-0.182px;">Create - OFF</div>
<div class="t" style="left:596.4px;top:202px;font-size:14.67px;font-weight:700;color:#000;">Roles and Permissions</div>
<div class="t c" style="left:27.6px;width:284px;top:182px;font-size:14px;font-weight:700;color:#217346;transform:scaleX(0.9)">A</div>
<div class="t c" style="left:312.6px;width:144px;top:182px;font-size:14px;font-weight:700;color:#217346;transform:scaleX(0.9)">B</div>
<div class="t c" style="left:457.6px;width:144px;top:182px;font-size:14px;font-weight:700;color:#217346;transform:scaleX(0.9)">C</div>
<div class="t c" style="left:602.6px;width:144px;top:182px;font-size:14px;font-weight:700;color:#217346;transform:scaleX(0.9)">D</div>
<div class="t c" style="left:747.6px;width:144px;top:182px;font-size:14px;font-weight:700;color:#217346;transform:scaleX(0.9)">E</div>
<div class="t c" style="left:892.6px;width:144px;top:182px;font-size:14px;font-weight:700;color:#217346;transform:scaleX(0.9)">F</div>
<div class="t c" style="left:1037.6px;width:144px;top:182px;font-size:14px;font-weight:700;color:#217346;transform:scaleX(0.9)">G</div>
<div class="t c" style="left:1182.6px;width:144px;top:182px;font-size:14px;font-weight:700;color:#217346;transform:scaleX(0.9)">H</div>
<svg style="left:10px;top:197px" width="7" height="12" viewBox="0 0 7 12"><path d="M3 1 H5.6 V11 H3 V4.2 Q2 4.4 1 4.4 V2.2 Q2.3 2 3 1 Z" fill="#217346"/></svg>
<div class="t c" style="left:1px;width:25px;top:224px;font-size:12px;color:#444">2</div>
<div class="t c" style="left:1px;width:25px;top:244px;font-size:12px;color:#444">3</div>
<div class="t c" style="left:1px;width:25px;top:264px;font-size:12px;color:#444">4</div>
<div class="t c" style="left:1px;width:25px;top:284px;font-size:12px;color:#444">5</div>
<div class="t c" style="left:1px;width:25px;top:304px;font-size:12px;color:#444">6</div>
<div class="t c" style="left:1px;width:25px;top:324px;font-size:12px;color:#444">7</div>
<div class="t c" style="left:1px;width:25px;top:344px;font-size:12px;color:#444">8</div>
<div class="t c" style="left:1px;width:25px;top:364px;font-size:12px;color:#444">9</div>
<div class="t c" style="left:1px;width:25px;top:384px;font-size:12px;color:#444">10</div>
<div class="t c" style="left:1px;width:25px;top:404px;font-size:12px;color:#444">11</div>
<div class="t c" style="left:1px;width:25px;top:424px;font-size:12px;color:#444">12</div>
<div class="t c" style="left:1px;width:25px;top:444px;font-size:12px;color:#444">13</div>
<div class="t c" style="left:1px;width:25px;top:464px;font-size:12px;color:#444">14</div>
<div class="t c" style="left:1px;width:25px;top:484px;font-size:12px;color:#444">15</div>
<div class="t c" style="left:1px;width:25px;top:504px;font-size:12px;color:#444">16</div>
<div class="t c" style="left:1px;width:25px;top:524px;font-size:12px;color:#444">17</div>
<div class="t c" style="left:1px;width:25px;top:544px;font-size:12px;color:#444">18</div>
<div class="t c" style="left:1px;width:25px;top:564px;font-size:12px;color:#444">19</div>
<div class="t c" style="left:1px;width:25px;top:584px;font-size:12px;color:#444">20</div>
<div class="t c" style="left:1px;width:25px;top:604px;font-size:12px;color:#444">21</div>
<div class="t c" style="left:1px;width:25px;top:624px;font-size:12px;color:#444">22</div>
<div class="t c" style="left:1px;width:25px;top:644px;font-size:12px;color:#444">23</div>
<div style="left:25px;top:191px;width:1303px;height:2px;background:#217346"></div>
<div style="left:25px;top:212px;width:1298px;height:2px;background:#217346"></div>
<div style="left:25px;top:191px;width:2px;height:23px;background:#217346"></div>
<div style="left:1326px;top:191px;width:2px;height:18px;background:#217346"></div>
<div style="left:1324px;top:210px;width:5px;height:5px;background:#217346;outline:1px solid #fff"></div>
<!-- scrollbar -->
<div style="left:1349px;top:216px;width:15px;height:419px;background:#f2f2f2"></div>
<div style="left:1349px;top:175px;width:15px;height:15px;border:1px solid #ababab;box-sizing:border-box;background:#fff"></div>
<div style="left:1349px;top:190px;width:15px;height:26px;border:1px solid #ababab;box-sizing:border-box;background:#fff"></div>
<svg style="left:1352px;top:179px" width="8" height="6"><polygon points="0,5 4,1 8,5" fill="#606060"/></svg>
<!-- window border -->
<div style="left:0;top:0;width:1368px;height:1px;background:#6e6e6e"></div>
<div style="left:0;top:636px;width:1368px;height:1px;background:#6e6e6e"></div>
<div style="left:0;top:0;width:1px;height:637px;background:#6e6e6e"></div>
<div style="left:1367px;top:0;width:1px;height:637px;background:#6e6e6e"></div>
</body></html>
